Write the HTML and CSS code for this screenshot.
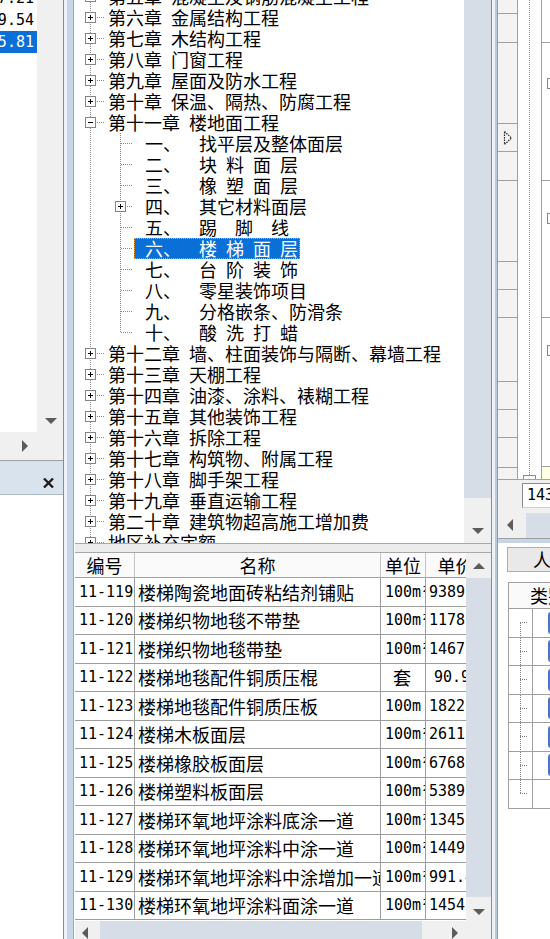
FILE: index.html
```html
<!DOCTYPE html>
<html lang="zh-CN">
<head>
<meta charset="utf-8">
<title>定额库</title>
<link rel="stylesheet" href="styles.css">
</head>
<body>
<div class="app">
  <aside class="left">
    <div class="lv">
      <div class="lv-rows">
        <div class="lv-row lv-first">37.21</div>
        <div class="lv-row">19.54</div>
        <div class="lv-row sel">25.81</div>
      </div>
      <div class="lv-vs">
        <svg class="arr" width="12" height="6" viewBox="0 0 12 6"><path d="M0 0H12L6 6Z"/></svg>
      </div>
    </div>
    <div class="lv-hs">
      <svg class="arr" width="6" height="12" viewBox="0 0 6 12"><path d="M0 0V12L6 6Z"/></svg>
    </div>
    <div class="pane-head">
      <svg class="close" width="11" height="10" viewBox="0 0 11 10"><path d="M1 0.5L10 9.5M10 0.5L1 9.5"/></svg>
    </div>
    <div class="pane-body"></div>
  </aside>

  <div class="split1"></div>

  <main class="middle">
    <div class="tree-wrap">
      <div class="tree">
        <div class="tree-in">
          <div class="node"><span class="g1"><i class="box plus"></i><i class="tick"></i></span><span class="lbl">第五章&ensp;混凝土及钢筋混凝土工程</span></div>
          <div class="node"><span class="g1"><i class="box plus"></i><i class="tick"></i></span><span class="lbl">第六章&ensp;金属结构工程</span></div>
          <div class="node"><span class="g1"><i class="box plus"></i><i class="tick"></i></span><span class="lbl">第七章&ensp;木结构工程</span></div>
          <div class="node"><span class="g1"><i class="box plus"></i><i class="tick"></i></span><span class="lbl">第八章&ensp;门窗工程</span></div>
          <div class="node"><span class="g1"><i class="box plus"></i><i class="tick"></i></span><span class="lbl">第九章&ensp;屋面及防水工程</span></div>
          <div class="node"><span class="g1"><i class="box plus"></i><i class="tick"></i></span><span class="lbl">第十章&ensp;保温、隔热、防腐工程</span></div>
          <div class="node"><span class="g1"><i class="box minus"></i><i class="tick"></i></span><span class="lbl">第十一章&ensp;楼地面工程</span></div>
          <div class="kids">
            <div class="node"><span class="g1"></span><span class="g2"><i class="tick2"></i></span><span class="lbl">&ensp;一、&ensp;&ensp;找平层及整体面层</span></div>
            <div class="node"><span class="g1"></span><span class="g2"><i class="tick2"></i></span><span class="lbl">&ensp;二、&ensp;&ensp;块&ensp;料&ensp;面&ensp;层</span></div>
            <div class="node"><span class="g1"></span><span class="g2"><i class="tick2"></i></span><span class="lbl">&ensp;三、&ensp;&ensp;橡&ensp;塑&ensp;面&ensp;层</span></div>
            <div class="node"><span class="g1"></span><span class="g2"><i class="box plus"></i><i class="tick3"></i></span><span class="lbl">&ensp;四、&ensp;&ensp;其它材料面层</span></div>
            <div class="node"><span class="g1"></span><span class="g2"><i class="tick2"></i></span><span class="lbl">&ensp;五、&ensp;&ensp;踢&ensp;&ensp;脚&ensp;&ensp;线</span></div>
            <div class="node"><span class="g1"></span><span class="g2"><i class="tick2"></i></span><span class="lbl sel">&ensp;六、&ensp;&ensp;楼&ensp;梯&ensp;面&ensp;层</span></div>
            <div class="node"><span class="g1"></span><span class="g2"><i class="tick2"></i></span><span class="lbl">&ensp;七、&ensp;&ensp;台&ensp;阶&ensp;装&ensp;饰</span></div>
            <div class="node"><span class="g1"></span><span class="g2"><i class="tick2"></i></span><span class="lbl">&ensp;八、&ensp;&ensp;零星装饰项目</span></div>
            <div class="node"><span class="g1"></span><span class="g2"><i class="tick2"></i></span><span class="lbl">&ensp;九、&ensp;&ensp;分格嵌条、防滑条</span></div>
            <div class="node"><span class="g1"></span><span class="g2"><i class="tick2"></i></span><span class="lbl">&ensp;十、&ensp;&ensp;酸&ensp;洗&ensp;打&ensp;蜡</span></div>
          </div>
          <div class="node"><span class="g1"><i class="box plus"></i><i class="tick"></i></span><span class="lbl">第十二章&ensp;墙、柱面装饰与隔断、幕墙工程</span></div>
          <div class="node"><span class="g1"><i class="box plus"></i><i class="tick"></i></span><span class="lbl">第十三章&ensp;天棚工程</span></div>
          <div class="node"><span class="g1"><i class="box plus"></i><i class="tick"></i></span><span class="lbl">第十四章&ensp;油漆、涂料、裱糊工程</span></div>
          <div class="node"><span class="g1"><i class="box plus"></i><i class="tick"></i></span><span class="lbl">第十五章&ensp;其他装饰工程</span></div>
          <div class="node"><span class="g1"><i class="box plus"></i><i class="tick"></i></span><span class="lbl">第十六章&ensp;拆除工程</span></div>
          <div class="node"><span class="g1"><i class="box plus"></i><i class="tick"></i></span><span class="lbl">第十七章&ensp;构筑物、附属工程</span></div>
          <div class="node"><span class="g1"><i class="box plus"></i><i class="tick"></i></span><span class="lbl">第十八章&ensp;脚手架工程</span></div>
          <div class="node"><span class="g1"><i class="box plus"></i><i class="tick"></i></span><span class="lbl">第十九章&ensp;垂直运输工程</span></div>
          <div class="node"><span class="g1"><i class="box plus"></i><i class="tick"></i></span><span class="lbl">第二十章&ensp;建筑物超高施工增加费</span></div>
          <div class="node"><span class="g1"><i class="box plus"></i><i class="tick"></i></span><span class="lbl">地区补充定额</span></div>
        </div>
      </div>
      <div class="tvs">
        <div class="thumb"></div>
        <div class="track"></div>
        <div class="sbtn dn"><svg class="arr" width="12" height="6" viewBox="0 0 12 6"><path d="M0 0H12L6 6Z"/></svg></div>
      </div>
    </div>

    <div class="hsplit"></div>

    <div class="grid-wrap">
      <div class="grid">
        <div class="gh">编号</div><div class="gh">名称</div><div class="gh">单位</div><div class="gh">单价</div>

        <div class="c code">11-119</div><div class="c name">楼梯陶瓷地面砖粘结剂铺贴</div><div class="c unit">100m²</div><div class="c price">9389.57</div>
        <div class="c code">11-120</div><div class="c name">楼梯织物地毯不带垫</div><div class="c unit">100m²</div><div class="c price">1178.42</div>
        <div class="c code">11-121</div><div class="c name">楼梯织物地毯带垫</div><div class="c unit">100m²</div><div class="c price">1467.20</div>
        <div class="c code">11-122</div><div class="c name">楼梯地毯配件铜质压棍</div><div class="c unit cjk">套</div><div class="c price short">90.96</div>
        <div class="c code">11-123</div><div class="c name">楼梯地毯配件铜质压板</div><div class="c unit">100m</div><div class="c price">1822.35</div>
        <div class="c code">11-124</div><div class="c name">楼梯木板面层</div><div class="c unit">100m²</div><div class="c price">2611.08</div>
        <div class="c code">11-125</div><div class="c name">楼梯橡胶板面层</div><div class="c unit">100m²</div><div class="c price">6768.91</div>
        <div class="c code">11-126</div><div class="c name">楼梯塑料板面层</div><div class="c unit">100m²</div><div class="c price">5389.64</div>
        <div class="c code">11-127</div><div class="c name">楼梯环氧地坪涂料底涂一道</div><div class="c unit">100m²</div><div class="c price">1345.77</div>
        <div class="c code">11-128</div><div class="c name">楼梯环氧地坪涂料中涂一道</div><div class="c unit">100m²</div><div class="c price">1449.13</div>
        <div class="c code">11-129</div><div class="c name">楼梯环氧地坪涂料中涂增加一道</div><div class="c unit">100m²</div><div class="c price">991.46</div>
        <div class="c code">11-130</div><div class="c name">楼梯环氧地坪涂料面涂一道</div><div class="c unit">100m²</div><div class="c price">1454.82</div>
      </div>
      <div class="gvs">
        <div class="sbtn up"><svg class="arr" width="12" height="6" viewBox="0 0 12 6"><path d="M0 6H12L6 0Z"/></svg></div>
        <div class="thumb"></div>
        <div class="sbtn dn2"><svg class="arr" width="12" height="6" viewBox="0 0 12 6"><path d="M0 0H12L6 6Z"/></svg></div>
      </div>
    </div>

    <div class="hs">
      <div class="hbtn lft"><svg class="arr" width="6" height="12" viewBox="0 0 6 12"><path d="M6 0V12L0 6Z"/></svg></div>
      <div class="hthumb"></div>
      <div class="htrack"></div>
      <div class="hbtn rgt"><svg class="arr" width="6" height="12" viewBox="0 0 6 12"><path d="M0 0V12L6 6Z"/></svg></div>
      <div class="corner"></div>
    </div>
  </main>

  <div class="split2"></div>

  <section class="right">
    <div class="rtop">
      <div class="colA">
        <div class="ra h14"></div>
        <div class="ra h29"></div>
        <div class="ra h81"></div>
        <div class="ra h28 cur"><svg class="ptr" width="10" height="16" viewBox="0 0 10 16"><path d="M1.5 1.5L8.5 8L1.5 14.5Z"/></svg></div>
        <div class="ra h29"></div>
        <div class="ra h81"></div>
        <div class="ra h28"></div>
        <div class="ra h28"></div>
        <div class="ra h64"></div>
        <div class="ra h28"></div>
        <div class="ra h28"></div>
        <div class="ra h30"></div>
        <div class="ra rest"></div>
      </div>
      <div class="colB">
        <div class="dline"></div>
        <div class="knob"></div>
      </div>
      <div class="colC">
        <div class="rc c43"></div>
        <div class="rc c138"><i class="box plus"></i></div>
        <div class="rc c137"><i class="box plus"></i></div>
        <div class="rc c149"><i class="box plus"></i></div>
        <div class="rc yel"></div>
      </div>
    </div>
    <div class="rtool"><div class="rinput">143</div></div>
    <div class="rhs">
      <div class="rhbtn"><svg class="arr" width="6" height="12" viewBox="0 0 6 12"><path d="M6 0V12L0 6Z"/></svg></div>
      <div class="rhthumb"></div>
    </div>
    <div class="rsep"></div>
    <div class="rbot">
      <div class="rbtn">人工</div>
      <div class="rgrid">
        <div class="rg-head">类别</div>
        <div class="rg-row"><div class="rg-c1 first"></div><div class="rg-c2"><i class="chip"></i></div></div>
        <div class="rg-row"><div class="rg-c1"></div><div class="rg-c2"><i class="chip"></i></div></div>
        <div class="rg-row"><div class="rg-c1"></div><div class="rg-c2"><i class="chip"></i></div></div>
        <div class="rg-row"><div class="rg-c1"></div><div class="rg-c2"><i class="chip"></i></div></div>
        <div class="rg-row"><div class="rg-c1"></div><div class="rg-c2"><i class="chip"></i></div></div>
        <div class="rg-row"><div class="rg-c1"></div><div class="rg-c2"><i class="chip"></i></div></div>
        <div class="rg-row"><div class="rg-c1 last"></div><div class="rg-c2"></div></div>
      </div>
    </div>
  </section>
</div>
</body>
</html>
```

FILE: styles.css
```css
* { box-sizing: border-box; margin: 0; padding: 0; }
html, body { width: 550px; height: 939px; overflow: hidden; background: #fff; }
body { font-family: "Noto Sans CJK SC", sans-serif; font-size: 18px; color: #000; }

.app { display: flex; width: 550px; height: 939px; overflow: hidden; }

.arr { display: block; fill: #5c5c5c; flex: none; }

/* ---------- left pane ---------- */
.left { width: 64px; flex: none; border-right: 1px solid #8c8c8c; display: flex; flex-direction: column; }
.lv { height: 432px; display: flex; }
.lv-rows { width: 37px; flex: none; overflow: hidden; background: #fff; }
.lv-row { height: 22px; display: flex; justify-content: flex-end; align-items: center; padding-right: 3px;
  font-family: "DejaVu Sans Mono", monospace; font-size: 15px; line-height: 22px; white-space: nowrap; }
.lv-first { margin-top: -13px; }
.lv-row.sel { background: #0b6fd8; color: #fff; }
.lv-vs { flex: 1; background: #f0f0f0; display: flex; align-items: flex-end; justify-content: center; padding-bottom: 8px; padding-left: 1px; }
.lv-hs { height: 29px; background: #f0f0f0; border-bottom: 1px solid #a0a0a0; display: flex; align-items: center; padding-left: 22px; padding-bottom: 1px; }
.pane-head { height: 34px; background: #d9e3ed; border-bottom: 1px solid #a9b5c1; display: flex; align-items: flex-start; padding: 17px 0 0 43px; }
.close { display: block; stroke: #1c1c1c; stroke-width: 2.3; fill: none; }
.pane-body { flex: 1; background: #fff; }

/* ---------- splitters ---------- */
.split1 { width: 11px; flex: none;
  background: linear-gradient(to right, #eef2f6 0 3px, #c6d6e6 3px 9px, #9ea7b1 9px 10px, #ffffff 10px 11px); }
.split2 { width: 7px; flex: none;
  background: linear-gradient(to right, #8c8c8c 0 1px, #eef2f6 1px 4px, #b8c9da 4px 6px, #9a9a9a 6px 7px); }

/* ---------- middle pane ---------- */
.middle { width: 416px; flex: none; display: flex; flex-direction: column; }
.tree-wrap { height: 543px; display: flex; }
.tree { flex: 1; overflow: hidden;
  background: repeating-linear-gradient(to bottom, #888 0 1px, transparent 1px 2px) 15px 0 / 1px 100% no-repeat, #fff; }
.tree-in { margin-top: -14px; }
.node { height: 21px; display: flex; align-items: center; white-space: nowrap; font-size: 18px; line-height: 21px; }
.g1 { width: 31px; flex: none; display: flex; align-items: center; padding-left: 10px; }
.g2 { width: 28px; flex: none; display: flex; align-items: center; }
.box { display: block; flex: none; width: 11px; height: 11px; border: 1px solid #858585; background-color: #fff; }
.box.plus { background: linear-gradient(#000, #000) center / 5px 1px no-repeat, linear-gradient(#000, #000) center / 1px 5px no-repeat, #fff; }
.box.minus { background: linear-gradient(#000, #000) center / 5px 1px no-repeat, #fff; }
.tick, .tick2, .tick3 { display: block; flex: none; height: 1px;
  background: repeating-linear-gradient(to right, #888 0 1px, transparent 1px 2px); }
.tick { width: 7px; margin-left: 1px; }
.tick2 { width: 11px; margin-left: 15px; }
.g2 .box { margin-left: 9px; }
.tick3 { width: 6px; margin-left: 1px; }
.lbl { display: block; height: 21px; padding: 0 2px; }
.lbl.sel { background: #0b6fd8; color: #fff; outline: 1px dotted #f0a040; outline-offset: -1px; }
.kids { background: repeating-linear-gradient(to bottom, #888 0 1px, transparent 1px 2px) 45px 0 / 1px calc(100% - 10px) no-repeat; }

.tvs { width: 27px; flex: none; display: flex; flex-direction: column; }
.tvs .thumb { height: 498px; background: #d6dde6; }
.tvs .track { flex: 1; background: #f0f0f0; }
.sbtn { background: #f0f0f0; display: flex; justify-content: center; }
.sbtn.dn { height: 23px; align-items: flex-start; padding-top: 8px; }

.hsplit { height: 10px; background: #ececec; border-top: 1px solid #a8a8a8; border-bottom: 1px solid #a8a8a8; }

.grid-wrap { height: 368px; display: flex; }
.grid { width: 391px; flex: none; overflow: hidden; display: grid; background: #fff;
  grid-template-columns: 60px 246px 45px 60px; grid-template-rows: 25px repeat(12, 28.5px); }
.gh { display: flex; align-items: center; justify-content: center; background: #fafafa; white-space: nowrap; overflow: hidden;
  border-right: 1px solid #c4c4c4; border-bottom: 1px solid #a0a0a0; line-height: 24px; }
.c { display: flex; align-items: center; overflow: hidden; white-space: nowrap;
  border-right: 1px solid #9c9c9c; border-bottom: 1px solid #9c9c9c; }
.code, .unit, .price { font-family: "DejaVu Sans Mono", monospace; font-size: 15px; }
.code { padding-left: 4px; }
.name { padding-left: 3px; }
.unit { padding-left: 4px; }
.unit.cjk { font-family: "Noto Sans CJK SC", sans-serif; font-size: 18px; padding-left: 12px; }
.price { padding-left: 3px; }
.price.short { padding-left: 8px; }

.gvs { width: 25px; flex: none; display: flex; flex-direction: column; }
.gvs .up { height: 25px; align-items: center; }
.gvs .thumb { height: 319px; background: #d6dde6; }
.gvs .dn2 { flex: 1; align-items: flex-start; padding-top: 12px; }

.hs { height: 18px; display: flex; }
.hbtn { background: #f0f0f0; display: flex; align-items: flex-start; padding-top: 6px; }
.hbtn.lft { width: 25px; padding-left: 7px; }
.hthumb { width: 322px; background: #d6dde6; }
.htrack { width: 21px; background: #f0f0f0; }
.hbtn.rgt { width: 23px; padding-left: 9px; }
.corner { flex: 1; background: #f0f0f0; }

/* ---------- right pane ---------- */
.right { width: 52px; flex: none; overflow: hidden; display: flex; flex-direction: column; }
.rtop { height: 480px; display: flex; border-bottom: 1px solid #a0a0a0; }
.colA { width: 20px; flex: none; display: flex; flex-direction: column; border-right: 1px solid #a0a0a0; }
.ra { background: #f3f3f3; border-bottom: 1px solid #a0a0a0; flex: none; }
.h14 { height: 14px; } .h28 { height: 28px; } .h29 { height: 29px; } .h30 { height: 30px; }
.h64 { height: 64px; } .h81 { height: 81px; }
.ra.rest { flex: 1; border-bottom: 0; }
.ra.cur { display: flex; align-items: center; padding-left: 5px; }
.ptr { display: block; fill: none; stroke: #202020; stroke-width: 1.2; stroke-dasharray: 1.5 1; }
.colB { width: 24px; flex: none; display: flex; flex-direction: column; border-right: 1px solid #a0a0a0; background: #fff; }
.dline { flex: 1; background: repeating-linear-gradient(to bottom, #8a8a8a 0 1px, transparent 1px 2px) 11px 0 / 1px 100% no-repeat; }
.knob { height: 4px; width: 13px; margin-left: 5px; border: 1px solid #8a8a8a; border-bottom: 0; background: #fff; flex: none; }
.colC { flex: 1; display: flex; flex-direction: column; background: #fff; }
.rc { flex: none; border-bottom: 1px solid #a0a0a0; padding-left: 5px; }
.c43 { height: 43px; }
.c138 { height: 138px; padding-top: 35px; }
.c137 { height: 137px; padding-top: 32px; }
.c149 { height: 149px; padding-top: 27px; }
.rc.yel { flex: 1; border-bottom: 0; background: #ffffe1; }

.rtool { height: 31px; background: #f0f0f0; padding: 3px 0 0 24px; }
.rinput { width: 40px; height: 25px; background: #fff; border: 1px solid #8a8a8a; border-right-color: #d0d0d0; border-bottom-color: #d0d0d0;
  font-family: "DejaVu Sans Mono", monospace; font-size: 15px; line-height: 23px; padding-left: 4px; white-space: nowrap; }
.rhs { height: 27px; display: flex; background: #f0f0f0; }
.rhbtn { width: 28px; flex: none; display: flex; align-items: center; padding-left: 9px; }
.rhthumb { flex: 1; margin-top: 2px; background: #d6dde6; }
.rsep { height: 5px; border-top: 1px solid #a0a0a0; background: #c6d6e6; }
.rbot { flex: 1; background: #fff; padding: 4px 0 0 9px; }
.rbtn { width: 88px; height: 25px; background: #e9e9e9; border: 1px solid #adadad; text-align: center; line-height: 23px; white-space: nowrap; }
.rgrid { width: 80px; margin: 10px 0 0 1px; border-top: 1px solid #a0a0a0; border-left: 1px solid #a0a0a0; }
.rg-head { height: 26px; border-bottom: 1px solid #a0a0a0; background: #fafafa; padding-left: 21px; line-height: 25px; white-space: nowrap; }
.rg-row { height: 28.5px; display: flex; border-bottom: 1px solid #a0a0a0; }
.rg-c1 { width: 24px; flex: none; border-right: 1px solid #a0a0a0;
  background:
    repeating-linear-gradient(to right, #808080 0 1px, transparent 1px 2px) 11px 50% / 7px 1px no-repeat,
    repeating-linear-gradient(to bottom, #808080 0 1px, transparent 1px 2px) 11px 0 / 1px 100% no-repeat; }
.rg-c1.first {
  background:
    repeating-linear-gradient(to right, #808080 0 1px, transparent 1px 2px) 11px 50% / 7px 1px no-repeat,
    repeating-linear-gradient(to bottom, #808080 0 1px, transparent 1px 2px) 11px 100% / 1px 50% no-repeat; }
.rg-c1.last {
  background:
    repeating-linear-gradient(to right, #808080 0 1px, transparent 1px 2px) 11px 50% / 7px 1px no-repeat,
    repeating-linear-gradient(to bottom, #808080 0 1px, transparent 1px 2px) 11px 0 / 1px 50% no-repeat; }
.rg-c2 { flex: 1; display: flex; align-items: center; padding-left: 15px; }
.chip { display: block; width: 20px; height: 22px; border-radius: 3px; background: #4a73c9; }
```
